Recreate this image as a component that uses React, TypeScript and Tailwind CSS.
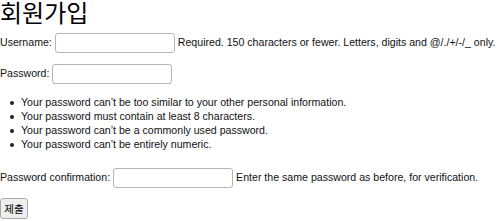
const sans = { fontFamily: '"Liberation Sans", Arial, sans-serif' };

function Field({ wide = 120 }: { wide?: number }) {
  return (
    <input
      type="text"
      className="ml-[3px] h-[20px] rounded-[3px] border border-[#b5b5b5] bg-white px-1 text-[10.6px] outline-none"
      style={{ width: wide }}
    />
  );
}

const rules = [
  'Your password can’t be too similar to your other personal information.',
  'Your password must contain at least 8 characters.',
  'Your password can’t be a commonly used password.',
  'Your password can’t be entirely numeric.',
];

export default function App() {
  return (
    <div className="h-[221px] w-[500px] overflow-hidden bg-white text-[10.6px] text-[#111]" style={sans}>
      <h1
        className="-mt-[6px] text-[24px] leading-[35px] font-normal text-black"
        style={{ fontFamily: '"Noto Sans CJK KR", "Noto Sans", sans-serif' }}
      >
        회원가입
      </h1>

      <div className="mt-[4px] flex h-[20px] items-center whitespace-nowrap">
        <span>Username:</span>
        <Field />
        <span className="ml-[3px]">Required. 150 characters or fewer. Letters, digits and @/./+/-/_ only.</span>
      </div>

      <div className="mt-[11px] flex h-[20px] items-center whitespace-nowrap">
        <span>Password:</span>
        <Field />
      </div>

      <ul className="mt-[12px]">
        {rules.map((r) => (
          <li key={r} className="flex h-[14px] items-center whitespace-nowrap">
            <span className="flex w-[21px] shrink-0">
              <span className="ml-[10px] h-[3.5px] w-[3.5px] rounded-full bg-[#222]" />
            </span>
            <span>{r}</span>
          </li>
        ))}
      </ul>

      <div className="mt-[16px] flex h-[20px] items-center whitespace-nowrap">
        <span>Password confirmation:</span>
        <Field />
        <span className="ml-[3px]">Enter the same password as before, for verification.</span>
      </div>

      <button
        type="button"
        className="mt-[10px] flex h-[21px] w-[28px] items-center justify-center rounded-[3px] border border-[#a9a9a9] bg-[#efefef] text-[10.6px] text-black"
        style={{ fontFamily: '"Noto Sans CJK KR", sans-serif' }}
      >
        제출
      </button>
    </div>
  );
}
